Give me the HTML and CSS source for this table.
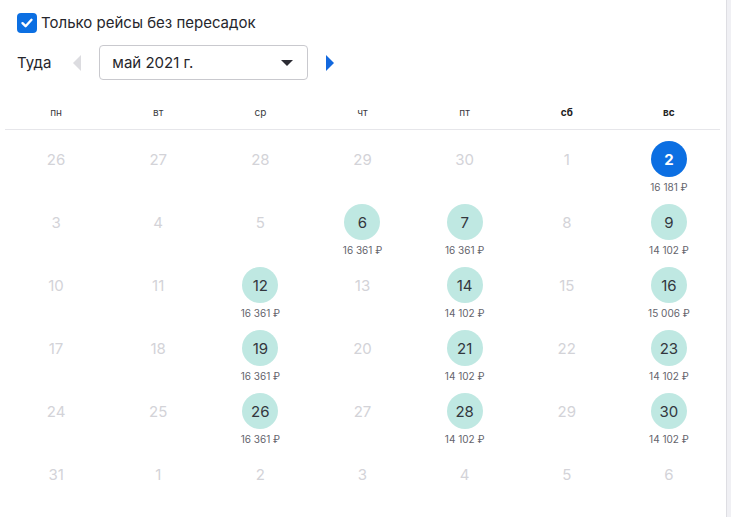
FILE: index.html
```html
<!DOCTYPE html>
<html lang="ru">
<head>
<meta charset="utf-8">
<title>Календарь</title>
<link rel="stylesheet" href="styles.css">
</head>
<body>
<div class="page">
  <div class="main">
    <label class="filter">
      <span class="checkbox">
        <svg width="14" height="14" viewBox="0 0 14 14"><path d="M2.5 7.2 L5.6 10.2 L11.5 3.8" fill="none" stroke="#fff" stroke-width="2.4" stroke-linecap="round" stroke-linejoin="round"/></svg>
      </span>
      <span class="filter-text">Только рейсы без пересадок</span>
    </label>
    <div class="route">
      <span class="route-label">Туда</span>
      <span class="arrow arrow-prev"></span>
      <div class="select">
        <span>май 2021 г.</span>
        <span class="caret"></span>
      </div>
      <span class="arrow arrow-next"></span>
    </div>
    <div class="calendar">
      <div class="weekdays">
        <span>пн</span><span>вт</span><span>ср</span><span>чт</span><span>пт</span><span class="weekend">сб</span><span class="weekend">вс</span>
      </div>
      <div class="days">
        <div class="day off"><span class="num">26</span></div>
        <div class="day off"><span class="num">27</span></div>
        <div class="day off"><span class="num">28</span></div>
        <div class="day off"><span class="num">29</span></div>
        <div class="day off"><span class="num">30</span></div>
        <div class="day off"><span class="num">1</span></div>
        <div class="day selected"><span class="num">2</span><span class="price">16 181 ₽</span></div>

        <div class="day off"><span class="num">3</span></div>
        <div class="day off"><span class="num">4</span></div>
        <div class="day off"><span class="num">5</span></div>
        <div class="day avail"><span class="num">6</span><span class="price">16 361 ₽</span></div>
        <div class="day avail"><span class="num">7</span><span class="price">16 361 ₽</span></div>
        <div class="day off"><span class="num">8</span></div>
        <div class="day avail"><span class="num">9</span><span class="price">14 102 ₽</span></div>

        <div class="day off"><span class="num">10</span></div>
        <div class="day off"><span class="num">11</span></div>
        <div class="day avail"><span class="num">12</span><span class="price">16 361 ₽</span></div>
        <div class="day off"><span class="num">13</span></div>
        <div class="day avail"><span class="num">14</span><span class="price">14 102 ₽</span></div>
        <div class="day off"><span class="num">15</span></div>
        <div class="day avail"><span class="num">16</span><span class="price">15 006 ₽</span></div>

        <div class="day off"><span class="num">17</span></div>
        <div class="day off"><span class="num">18</span></div>
        <div class="day avail"><span class="num">19</span><span class="price">16 361 ₽</span></div>
        <div class="day off"><span class="num">20</span></div>
        <div class="day avail"><span class="num">21</span><span class="price">14 102 ₽</span></div>
        <div class="day off"><span class="num">22</span></div>
        <div class="day avail"><span class="num">23</span><span class="price">14 102 ₽</span></div>

        <div class="day off"><span class="num">24</span></div>
        <div class="day off"><span class="num">25</span></div>
        <div class="day avail"><span class="num">26</span><span class="price">16 361 ₽</span></div>
        <div class="day off"><span class="num">27</span></div>
        <div class="day avail"><span class="num">28</span><span class="price">14 102 ₽</span></div>
        <div class="day off"><span class="num">29</span></div>
        <div class="day avail"><span class="num">30</span><span class="price">14 102 ₽</span></div>

        <div class="day off"><span class="num">31</span></div>
        <div class="day off"><span class="num">1</span></div>
        <div class="day off"><span class="num">2</span></div>
        <div class="day off"><span class="num">3</span></div>
        <div class="day off"><span class="num">4</span></div>
        <div class="day off"><span class="num">5</span></div>
        <div class="day off"><span class="num">6</span></div>
      </div>
    </div>
  </div>
  <div class="scrollbar"></div>
</div>
</body>
</html>
```
FILE: styles.css
```css
html, body {
  margin: 0;
  padding: 0;
  background: #fff;
}
body {
  font-family: Inter, "Noto Sans", "DejaVu Sans", sans-serif;
  color: #222;
}
.page {
  display: flex;
  height: 517px;
  overflow: hidden;
}
.main {
  flex: 1;
  padding-top: 12px;
}
.scrollbar {
  width: 4px;
  background: #f0f0f4;
  border-left: 1px solid #dedee3;
}
.filter {
  display: flex;
  align-items: center;
  gap: 4px;
  padding-left: 17px;
  height: 21px;
}
.checkbox {
  width: 20px;
  height: 20px;
  border-radius: 4px;
  background: #0c6fe2;
  display: flex;
  align-items: center;
  justify-content: center;
}
.filter-text {
  font-size: 15px;
  color: #26262c;
}
.route {
  display: flex;
  align-items: center;
  margin-top: 12px;
  padding-left: 17px;
  height: 35px;
}
.route-label {
  font-size: 15px;
  color: #26262c;
}
.arrow {
  width: 0;
  height: 0;
  border-top: 8px solid transparent;
  border-bottom: 8px solid transparent;
}
.arrow-prev {
  border-right: 8px solid #dcdce0;
  margin-left: 22px;
  margin-right: 18px;
}
.arrow-next {
  border-left: 8px solid #1268de;
  margin-left: 18px;
}
.select {
  width: 209px;
  height: 35px;
  box-sizing: border-box;
  border: 1px solid #c9c9ce;
  border-radius: 4px;
  display: flex;
  align-items: center;
  justify-content: space-between;
  padding: 0 14px 0 12px;
  font-size: 15px;
  color: #26262c;
}
.caret {
  width: 0;
  height: 0;
  border-left: 6px solid transparent;
  border-right: 6px solid transparent;
  border-top: 6px solid #2c2c34;
}
.calendar {
  margin-left: 5px;
  width: 715px;
}
.weekdays {
  display: grid;
  grid-template-columns: repeat(7, 1fr);
  margin-top: 25px;
  padding-bottom: 10px;
  border-bottom: 1px solid #e6e6ea;
}
.weekdays span {
  text-align: center;
  font-size: 10px;
  line-height: 14px;
  color: #3a3a40;
}
.weekdays .weekend {
  font-weight: 700;
  color: #222;
}
.days {
  display: grid;
  grid-template-columns: repeat(7, 1fr);
  grid-auto-rows: 63px;
  padding-top: 11px;
}
.day {
  display: flex;
  flex-direction: column;
  align-items: center;
}
.num {
  width: 36px;
  height: 36px;
  border-radius: 50%;
  display: flex;
  align-items: center;
  justify-content: center;
  font-size: 15px;
}
.off .num {
  color: #d3d3d8;
}
.avail .num {
  background: #bfe8e2;
  color: #33373e;
}
.selected .num {
  background: #0c6fe2;
  color: #fff;
  font-weight: 700;
}
.price {
  margin-top: 4px;
  font-size: 10px;
  line-height: 12px;
  color: #64646c;
}
```
